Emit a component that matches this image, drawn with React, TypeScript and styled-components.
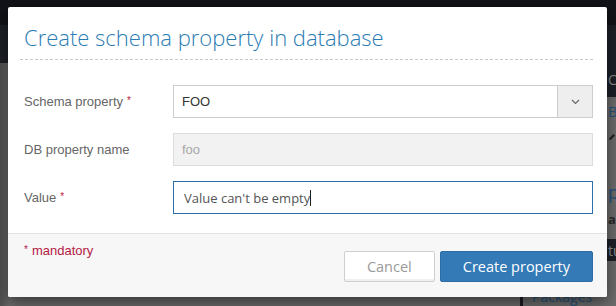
import React from "react";
import styled, { createGlobalStyle } from "styled-components";

const GlobalStyle = createGlobalStyle`
    html, body {
        margin: 0;
        padding: 0;
        overflow: hidden;
        background: #6c6c6c;
    }
    * {
        box-sizing: border-box;
    }
`;

const Page = styled.div`
    position: relative;
    width: 616px;
    height: 306px;
    display: flex;
    flex-direction: column;
    overflow: hidden;
    font-family: "Liberation Sans", Arial, sans-serif;
`;
const TopNav = styled.div`
    height: 25px;
    background: #111318;
`;
const PageBody = styled.div`
    flex: 1;
    display: flex;
`;
const Main = styled.div`
    flex: 1;
    display: flex;
    flex-direction: column;
`;
const MainHeader = styled.div`
    height: 38px;
    background: #1d2027;
`;
const MainContent = styled.div`
    flex: 1;
    background: linear-gradient(to right, #4f4f4f, #6c6c6c 10px);
`;
const Sidebar = styled.div`
    width: 96px;
    display: flex;
    flex-direction: column;
    border-left: 3px solid #1a1c21;
`;
// the sidebar's left part sits under the modal, only the value column peeks out
const SideHead = styled.div`
    height: 72px;
    background: #1d2027;
    display: flex;
    align-items: flex-end;
    padding: 0 0 8px 85px;
    color: #8d8f93;
    font: 14px "Open Sans", sans-serif;
`;
const PropList = styled.div`
    display: flex;
    flex-direction: column;
    padding-left: 85px;
    font-family: "Open Sans", sans-serif;
`;
const PropCell = styled.div<{ $h: number; $color?: string; $size?: number; $bold?: boolean }>`
    height: ${(p) => p.$h}px;
    color: ${(p) => p.$color || "#2a2a2a"};
    font-size: ${(p) => p.$size || 13}px;
    font-weight: ${(p) => (p.$bold ? 700 : 400)};
    white-space: nowrap;
    overflow: hidden;
    display: flex;
    align-items: center;
`;
const DarkBar = styled.div`
    height: 22px;
    margin-top: 6px;
    background: #1d2027;
    display: flex;
    align-items: center;
    padding-left: 85px;
    color: #8d8f93;
    font: 14px "Open Sans", sans-serif;
`;
const SideLink = styled.div`
    margin-top: 26px;
    padding-left: 9px;
    color: #24527a;
    font: 14px "Open Sans", sans-serif;
`;

const Modal = styled.div`
    position: absolute;
    left: 8px;
    top: 7px;
    width: 599px;
    height: 290px;
    background: #fff;
    border-radius: 2px;
    box-shadow: 0 5px 15px rgba(0, 0, 0, 0.5);
    display: flex;
    flex-direction: column;
    overflow: hidden;
`;
const Header = styled.div`
    margin: 0 14px 0 12px;
    padding: 16px 4px 8px;
    border-bottom: 1px dashed #c8c8c8;
`;
const Title = styled.h4`
    margin: 0;
    font-family: "Open Sans", sans-serif;
    font-weight: 300;
    font-size: 22px;
    line-height: 28px;
    color: #2b7bb3;
`;
const Body = styled.div`
    padding: 25px 14px 19px 16px;
    display: flex;
    flex-direction: column;
    gap: 15px;
`;
const Row = styled.div`
    display: grid;
    grid-template-columns: 149px 1fr;
    align-items: center;
`;
const Label = styled.div`
    font-size: 13px;
    color: #666;
`;
const Req = styled.span`
    color: #c0143c;
    font-size: 10px;
    position: relative;
    top: -2px;
    margin-left: 4px;
`;
const Field = styled.div<{ $variant?: "disabled" | "focus" }>`
    height: 33px;
    display: flex;
    align-items: center;
    padding-left: 8px;
    border: 1px solid ${(p) => (p.$variant === "focus" ? "#2d70ab" : p.$variant === "disabled" ? "#dcdcdc" : "#cdcdcd")};
    background: ${(p) => (p.$variant === "disabled" ? "#f2f2f2" : "#fff")};
    color: ${(p) => (p.$variant === "disabled" ? "#a8a8a8" : "#333")};
    font-size: 13px;
`;
const SelectField = styled(Field)`
    padding-left: 0;
`;
const SelectValue = styled.div`
    flex: 1;
    padding-left: 8px;
`;
const SelectButton = styled.div`
    width: 35px;
    height: 100%;
    background: #eee;
    border-left: 1px solid #cdcdcd;
    display: flex;
    align-items: center;
    justify-content: center;
`;
const TypedText = styled.span`
    font-family: "Open Sans", sans-serif;
    color: #555;
    padding-left: 2px;
`;
const Caret = styled.span`
    display: inline-block;
    width: 1px;
    height: 16px;
    background: #222;
`;
const Footer = styled.div`
    flex: 1;
    background: #f7f7f7;
    border-top: 1px solid #e3e3e3;
    padding: 9px 14px 0 16px;
    display: flex;
    justify-content: space-between;
    align-items: flex-start;
`;
const Mandatory = styled.div`
    font-size: 13px;
    color: #b51a45;
    line-height: 15px;
    span {
        font-size: 10px;
        margin-right: 4px;
        position: relative;
        top: -2px;
    }
`;
const Actions = styled.div`
    margin-top: 8px;
    display: flex;
    gap: 5px;
`;
const Button = styled.button<{ $primary?: boolean }>`
    height: 31px;
    padding: 0 22px;
    border-radius: 2px;
    font-family: "Open Sans", sans-serif;
    font-size: 14.5px;
    border: 1px solid ${(p) => (p.$primary ? "#2e6da4" : "#cfcfcf")};
    background: ${(p) => (p.$primary ? "#337ab7" : "#fff")};
    color: ${(p) => (p.$primary ? "#fff" : "#9a9a9a")};
    box-shadow: ${(p) => (p.$primary ? "none" : "inset 0 -2px 0 #f0f0f0")};
`;

const Pencil = () => (
    <svg width="16" height="16" viewBox="0 0 16 16">
        <path d="M2 14 L3 10 L11 2 L14 5 L6 13 Z" fill="#1f1f22" />
    </svg>
);

export default function App() {
    return (
        <>
            <GlobalStyle />
            <Page>
                <TopNav />
                <PageBody>
                    <Main>
                        <MainHeader />
                        <MainContent />
                    </Main>
                    <Sidebar>
                        <SideHead>Co</SideHead>
                        <PropList>
                            <PropCell $h={28} $color="#24527a" $size={15}>BA</PropCell>
                            <PropCell $h={24}><Pencil /></PropCell>
                            <PropCell $h={30} />
                            <PropCell $h={26} $color="#24527a" $size={18}>p</PropCell>
                            <PropCell $h={28} $bold>a</PropCell>
                        </PropList>
                        <DarkBar>tu</DarkBar>
                        <SideLink>Packages</SideLink>
                    </Sidebar>
                </PageBody>

                <Modal>
                    <Header>
                        <Title>Create schema property in database</Title>
                    </Header>
                    <Body>
                        <Row>
                            <Label>Schema property<Req>*</Req></Label>
                            <SelectField>
                                <SelectValue>FOO</SelectValue>
                                <SelectButton>
                                    <svg width="9" height="6" viewBox="0 0 9 6">
                                        <path d="M1 1 L4.5 4.5 L8 1" fill="none" stroke="#666" strokeWidth="1.2" />
                                    </svg>
                                </SelectButton>
                            </SelectField>
                        </Row>
                        <Row>
                            <Label>DB property name</Label>
                            <Field $variant="disabled">foo</Field>
                        </Row>
                        <Row>
                            <Label>Value<Req>*</Req></Label>
                            <Field $variant="focus">
                                <TypedText>Value can't be empty</TypedText>
                                <Caret />
                            </Field>
                        </Row>
                    </Body>
                    <Footer>
                        <Mandatory><span>*</span>mandatory</Mandatory>
                        <Actions>
                            <Button>Cancel</Button>
                            <Button $primary>Create property</Button>
                        </Actions>
                    </Footer>
                </Modal>
            </Page>
        </>
    );
}
